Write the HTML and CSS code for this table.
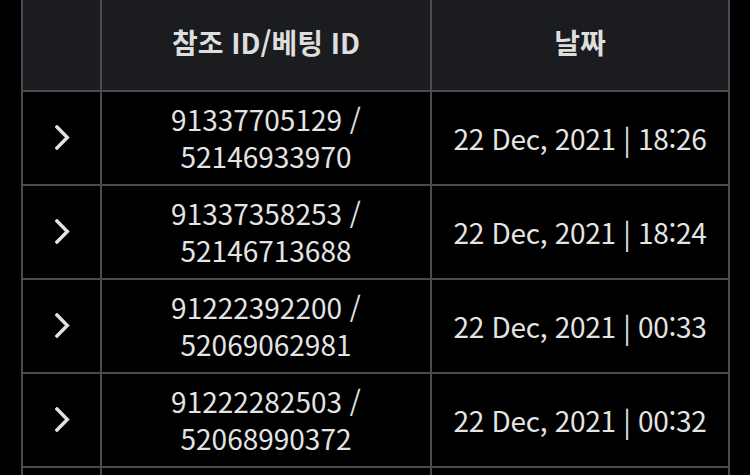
FILE: index.html
```html
<!DOCTYPE html>
<html lang="ko">
<head>
<meta charset="utf-8">
<link rel="stylesheet" href="styles.css">
</head>
<body>
<div class="wrap">
<table class="bets">
  <colgroup><col class="c1"><col class="c2"><col class="c3"></colgroup>
  <thead>
    <tr><th></th><th>참조 ID/베팅 ID</th><th>날짜</th></tr>
  </thead>
  <tbody>
    <tr>
      <td class="chev"><svg width="15" height="25" viewBox="0 0 15 25"><polyline points="2,2 12.3,12.5 2,23" fill="none" stroke="#e2e2e2" stroke-width="3.4" stroke-linecap="square"/></svg></td>
      <td class="ids">91337705129 /<br>52146933970</td>
      <td class="date">22 Dec, 2021 | 18:26</td>
    </tr>
    <tr>
      <td class="chev"><svg width="15" height="25" viewBox="0 0 15 25"><polyline points="2,2 12.3,12.5 2,23" fill="none" stroke="#e2e2e2" stroke-width="3.4" stroke-linecap="square"/></svg></td>
      <td class="ids">91337358253 /<br>52146713688</td>
      <td class="date">22 Dec, 2021 | 18:24</td>
    </tr>
    <tr>
      <td class="chev"><svg width="15" height="25" viewBox="0 0 15 25"><polyline points="2,2 12.3,12.5 2,23" fill="none" stroke="#e2e2e2" stroke-width="3.4" stroke-linecap="square"/></svg></td>
      <td class="ids">91222392200 /<br>52069062981</td>
      <td class="date">22 Dec, 2021 | 00:33</td>
    </tr>
    <tr>
      <td class="chev"><svg width="15" height="25" viewBox="0 0 15 25"><polyline points="2,2 12.3,12.5 2,23" fill="none" stroke="#e2e2e2" stroke-width="3.4" stroke-linecap="square"/></svg></td>
      <td class="ids">91222282503 /<br>52068990372</td>
      <td class="date">22 Dec, 2021 | 00:32</td>
    </tr>
    <tr class="partial">
      <td></td>
      <td></td>
      <td></td>
    </tr>
  </tbody>
</table>
</div>
</body>
</html>
```
FILE: styles.css
```css
html, body {
  margin: 0;
  padding: 0;
  background: #000;
  overflow: hidden;
}
.wrap {
  padding-left: 21px;
}
.bets {
  border-collapse: separate;
  border-spacing: 0;
  table-layout: fixed;
  width: 709px;
  font-family: "Noto Sans CJK KR", "Noto Sans", sans-serif;
  font-size: 28px;
  color: #e4e4e4;
  border-right: 2px solid #4c4c50;
}
.c1 { width: 79px; }
.c2 { width: 330px; }
.c3 { width: 298px; }
.bets th, .bets td {
  border-left: 2px solid #4c4c50;
  padding: 0;
  text-align: center;
  vertical-align: middle;
}
.bets th {
  background: #1b1c1f;
  height: 84px;
  padding-bottom: 6px;
  font-weight: bold;
  color: #dedede;
  line-height: 36px;
}
.bets td {
  border-top: 2px solid #4c4c50;
  height: 92px;
  line-height: 37px;
}
.bets .date {
  letter-spacing: -0.3px;
}
.chev svg {
  display: block;
  margin: 0 auto;
  position: relative;
  top: -1px;
  left: 1px;
}
```
